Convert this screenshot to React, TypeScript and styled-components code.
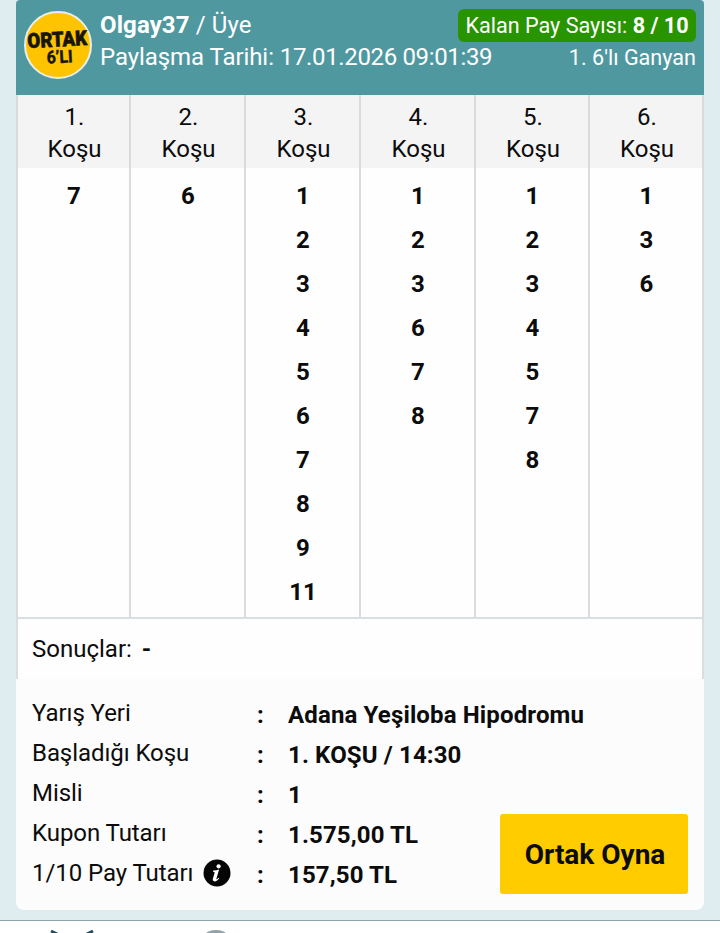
import React from 'react';
import styled, { createGlobalStyle } from 'styled-components';

const GlobalStyle = createGlobalStyle`
  * { box-sizing: border-box; }
  html, body { margin: 0; height: 933px; overflow: hidden; }
  body { background: #e0edf0; color: #0c0c0c; font-family: Roboto, "Liberation Sans", sans-serif; font-size: 24px; }
`;

const Page = styled.div`
  width: 720px;
  height: 933px;
  overflow: hidden;
  display: flex;
  flex-direction: column;
`;

const Coupon = styled.article`
  width: 688px;
  height: 910px;
  margin: 0 16px 10px;
  flex: none;
  display: flex;
  flex-direction: column;
  border-radius: 4px 4px 8px 8px;
  overflow: hidden;
  background: #fcfcfc;
`;

const Header = styled.header`
  height: 95px;
  flex: none;
  display: flex;
  align-items: flex-start;
  padding: 0 8px;
  background: #50989f;
  color: #fff;
`;

const Logo = styled.svg`
  width: 68px;
  height: 68px;
  margin-top: 11px;
  flex: none;
  overflow: visible;
`;

const HeaderLines = styled.div`
  margin-left: 8px;
  flex: 1;
  display: flex;
  flex-direction: column;
  white-space: nowrap;
`;

const HeaderLine = styled.div`
  display: flex;
  justify-content: space-between;
  align-items: flex-start;
`;

const Owner = styled.div`
  margin-top: 9px;
  line-height: 32px;
  letter-spacing: 0.1px;
`;

const ShareDate = styled.div`
  margin-top: -1px;
  line-height: 32px;
  letter-spacing: -0.07px;
`;

const Timestamp = styled.time`
  letter-spacing: -0.35px;
`;

const ShareBadge = styled.span`
  width: 238px;
  height: 33px;
  margin-top: 9px;
  border-radius: 6px;
  background: #289400;
  font-size: 21.6px;
  line-height: 33px;
  text-align: center;
`;

const GameName = styled.span`
  font-size: 21.6px;
  line-height: 32px;
`;

const Legs = styled.section`
  height: 524px;
  flex: none;
  display: grid;
  grid-template-columns: 113px 115px 115px 115px 114px 116px;
  border-bottom: 2px solid #d9dfe0;
  background: #fefefe;
`;

const Leg = styled.div`
  border-left: 2px solid #d9dcdd;
  text-align: center;
  &:last-child { border-right: 2px solid #d9dcdd; }
`;

const LegTitle = styled.div`
  height: 73px;
  margin-bottom: 6px;
  padding: 6px 0 0 2px;
  background: #f4f4f4;
  line-height: 32px;
`;

const Horse = styled.div`
  height: 44px;
  padding-left: 1px;
  line-height: 44px;
  font-weight: 700;
`;

const Results = styled.section`
  height: 60px;
  flex: none;
  padding-left: 14px;
  border: 0 solid #d9dfe0;
  border-width: 0 2px;
  background: #fefefe;
  line-height: 60px;
  b { margin-left: 4px; }
`;

const Details = styled.section`
  flex: 1;
  display: flex;
  align-items: flex-end;
  justify-content: space-between;
  padding: 0 16px;
`;

const Facts = styled.dl`
  align-self: flex-start;
  display: grid;
  grid-template-columns: 225px 31px max-content;
  grid-auto-rows: 40px;
  width: 460px;
  margin: 14px 0 0;
  line-height: 40px;
  white-space: nowrap;
`;

const Label = styled.dt`
  display: flex;
  align-items: center;
  gap: 10px;
  letter-spacing: -0.07px;
`;

const Colon = styled.span`
  font-weight: 700;
  padding-top: 2px;
`;

const Value = styled.dd`
  margin: 0;
  padding-top: 2px;
  font-weight: 700;
  letter-spacing: 0.14px;
`;

const PlayButton = styled.button`
  width: 188px;
  height: 80px;
  margin-bottom: 16px;
  padding: 0 0 0 2px;
  flex: none;
  border: 0;
  border-radius: 3px;
  background: #ffcc00;
  color: #0c0c0c;
  font: 700 28px Roboto, sans-serif;
`;

const BottomBar = styled.nav`
  height: 13px;
  flex: none;
  display: flex;
  border-top: 1px solid #91a3ad;
  background: #fff;
`;

const NavIcons = styled.svg`
  width: 260px;
  height: 12px;
`;

const legs = [
  [7],
  [6],
  [1, 2, 3, 4, 5, 6, 7, 8, 9, 11],
  [1, 2, 3, 6, 7, 8],
  [1, 2, 3, 4, 5, 7, 8],
  [1, 3, 6],
];

const facts = [
  { label: 'Yarış Yeri', value: 'Adana Yeşiloba Hipodromu' },
  { label: 'Başladığı Koşu', value: '1. KOŞU / 14:30' },
  { label: 'Misli', value: '1' },
  { label: 'Kupon Tutarı', value: '1.575,00 TL' },
  { label: '1/10 Pay Tutarı', value: '157,50 TL', info: true },
];

const InfoIcon = () => (
  <svg width="28" height="28" viewBox="0 0 28 28">
    <circle cx="14" cy="14" r="13.5" fill="#050505" />
    <circle cx="15.6" cy="7.3" r="2.1" fill="#fff" />
    <path d="M10.3 11.5c2.2-.1 4-.4 5.8-1l-2.7 9.2c-.2.8.5.8 1.1.1l1-1.1.8.6c-1.4 2.1-3 3.1-4.6 3.1-1.7 0-2.3-1.1-1.8-2.8l1.7-5.5c.2-.9 0-1.3-1.6-1.4z" fill="#fff" />
  </svg>
);

export default function App() {
  return (
    <>
      <GlobalStyle />
      <Page>
        <Coupon>
          <Header>
            <Logo viewBox="0 0 68 68">
              <circle cx="34" cy="34" r="33" fill="#ffc400" stroke="#e8eeea" strokeWidth="2" />
              <g fill="#17150a" fontFamily="Roboto, sans-serif" fontWeight="900" textAnchor="middle" transform="rotate(-3 34 34)">
                <text x="33.5" y="35.5" fontSize="20.5" textLength="59.5" lengthAdjust="spacingAndGlyphs" stroke="#17150a" strokeWidth=".7">ORTAK</text>
                <text x="35" y="52" fontSize="17.5" fontWeight="700" textLength="26" lengthAdjust="spacingAndGlyphs" stroke="#17150a" strokeWidth=".5">6’LI</text>
              </g>
            </Logo>
            <HeaderLines>
              <HeaderLine>
                <Owner><b>Olgay37</b> / Üye</Owner>
                <ShareBadge>Kalan Pay Sayısı: <b>8 / 10</b></ShareBadge>
              </HeaderLine>
              <HeaderLine>
                <ShareDate>Paylaşma Tarihi: <Timestamp>17.01.2026 09:01:39</Timestamp></ShareDate>
                <GameName>1. 6'lı Ganyan</GameName>
              </HeaderLine>
            </HeaderLines>
          </Header>
          <Legs>
            {legs.map((horses, i) => (
              <Leg key={i}>
                <LegTitle>{i + 1}.<br />Koşu</LegTitle>
                {horses.map((n) => <Horse key={n}>{n}</Horse>)}
              </Leg>
            ))}
          </Legs>
          <Results>Sonuçlar: <b>-</b></Results>
          <Details>
            <Facts>
              {facts.map(({ label, value, info }) => (
                <React.Fragment key={label}>
                  <Label>{label}{info && <InfoIcon />}</Label>
                  <Colon>:</Colon>
                  <Value>{value}</Value>
                </React.Fragment>
              ))}
            </Facts>
            <PlayButton>Ortak Oyna</PlayButton>
          </Details>
        </Coupon>
        <BottomBar>
          <NavIcons viewBox="0 0 260 12">
            <path d="M51 10l8 4M93 10l-8 4" stroke="#244b59" strokeWidth="3" />
            <circle cx="216" cy="27" r="18" fill="#91a2ab" />
          </NavIcons>
        </BottomBar>
      </Page>
    </>
  );
}
